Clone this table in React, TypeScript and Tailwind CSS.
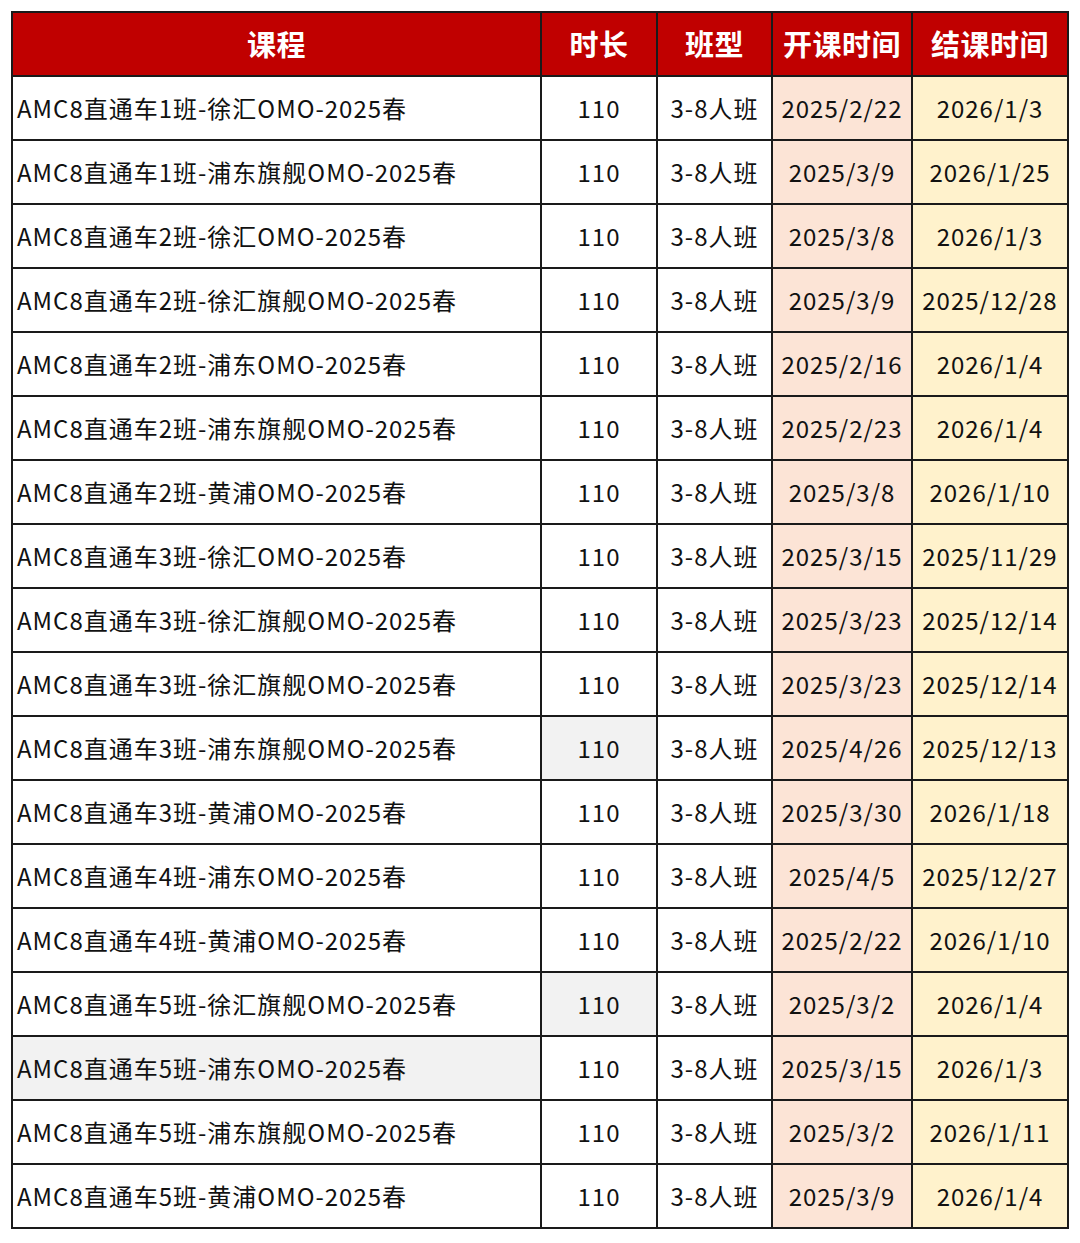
const rows: [string, string, string, string, string][] = [
  ['AMC8直通车1班-徐汇OMO-2025春', '110', '3-8人班', '2025/2/22', '2026/1/3'],
  ['AMC8直通车1班-浦东旗舰OMO-2025春', '110', '3-8人班', '2025/3/9', '2026/1/25'],
  ['AMC8直通车2班-徐汇OMO-2025春', '110', '3-8人班', '2025/3/8', '2026/1/3'],
  ['AMC8直通车2班-徐汇旗舰OMO-2025春', '110', '3-8人班', '2025/3/9', '2025/12/28'],
  ['AMC8直通车2班-浦东OMO-2025春', '110', '3-8人班', '2025/2/16', '2026/1/4'],
  ['AMC8直通车2班-浦东旗舰OMO-2025春', '110', '3-8人班', '2025/2/23', '2026/1/4'],
  ['AMC8直通车2班-黄浦OMO-2025春', '110', '3-8人班', '2025/3/8', '2026/1/10'],
  ['AMC8直通车3班-徐汇OMO-2025春', '110', '3-8人班', '2025/3/15', '2025/11/29'],
  ['AMC8直通车3班-徐汇旗舰OMO-2025春', '110', '3-8人班', '2025/3/23', '2025/12/14'],
  ['AMC8直通车3班-徐汇旗舰OMO-2025春', '110', '3-8人班', '2025/3/23', '2025/12/14'],
  ['AMC8直通车3班-浦东旗舰OMO-2025春', '110', '3-8人班', '2025/4/26', '2025/12/13'],
  ['AMC8直通车3班-黄浦OMO-2025春', '110', '3-8人班', '2025/3/30', '2026/1/18'],
  ['AMC8直通车4班-浦东OMO-2025春', '110', '3-8人班', '2025/4/5', '2025/12/27'],
  ['AMC8直通车4班-黄浦OMO-2025春', '110', '3-8人班', '2025/2/22', '2026/1/10'],
  ['AMC8直通车5班-徐汇旗舰OMO-2025春', '110', '3-8人班', '2025/3/2', '2026/1/4'],
  ['AMC8直通车5班-浦东OMO-2025春', '110', '3-8人班', '2025/3/15', '2026/1/3'],
  ['AMC8直通车5班-浦东旗舰OMO-2025春', '110', '3-8人班', '2025/3/2', '2026/1/11'],
  ['AMC8直通车5班-黄浦OMO-2025春', '110', '3-8人班', '2025/3/9', '2026/1/4'],
];

// rows whose cells have the light grey fill
const greyDuration = [10, 14];
const greyCourse = [15];

const cell = 'border-2 border-[#1a1a1a] h-[64px] p-0';

export default function App() {
  return (
    <div className="bg-white w-[1080px] h-[1243px] pt-[11px] pl-[11px] font-['Noto_Sans_CJK_SC','Noto_Sans',sans-serif]">
      <table className="table-fixed border-collapse text-[24px] text-[#111] tracking-[1px]">
        <colgroup>
          <col className="w-[529px]" />
          <col className="w-[116px]" />
          <col className="w-[115px]" />
          <col className="w-[140px]" />
          <col className="w-[156px]" />
        </colgroup>
        <thead>
          <tr className="bg-[#c00000] text-white text-[29px] font-bold tracking-[0.5px]">
            <th className={cell}>课程</th>
            <th className={cell}>时长</th>
            <th className={cell}>班型</th>
            <th className={cell}>开课时间</th>
            <th className={cell}>结课时间</th>
          </tr>
        </thead>
        <tbody>
          {rows.map((r, i) => (
            <tr key={i}>
              <td className={`${cell} pl-[4px] text-left ${greyCourse.includes(i) ? 'bg-[#f2f2f2]' : ''}`}>{r[0]}</td>
              <td className={`${cell} text-center ${greyDuration.includes(i) ? 'bg-[#f2f2f2]' : ''}`}>{r[1]}</td>
              <td className={`${cell} text-center`}>{r[2]}</td>
              <td className={`${cell} text-center bg-[#fce4d6]`}>{r[3]}</td>
              <td className={`${cell} text-center bg-[#fff2cc]`}>{r[4]}</td>
            </tr>
          ))}
        </tbody>
      </table>
    </div>
  );
}
